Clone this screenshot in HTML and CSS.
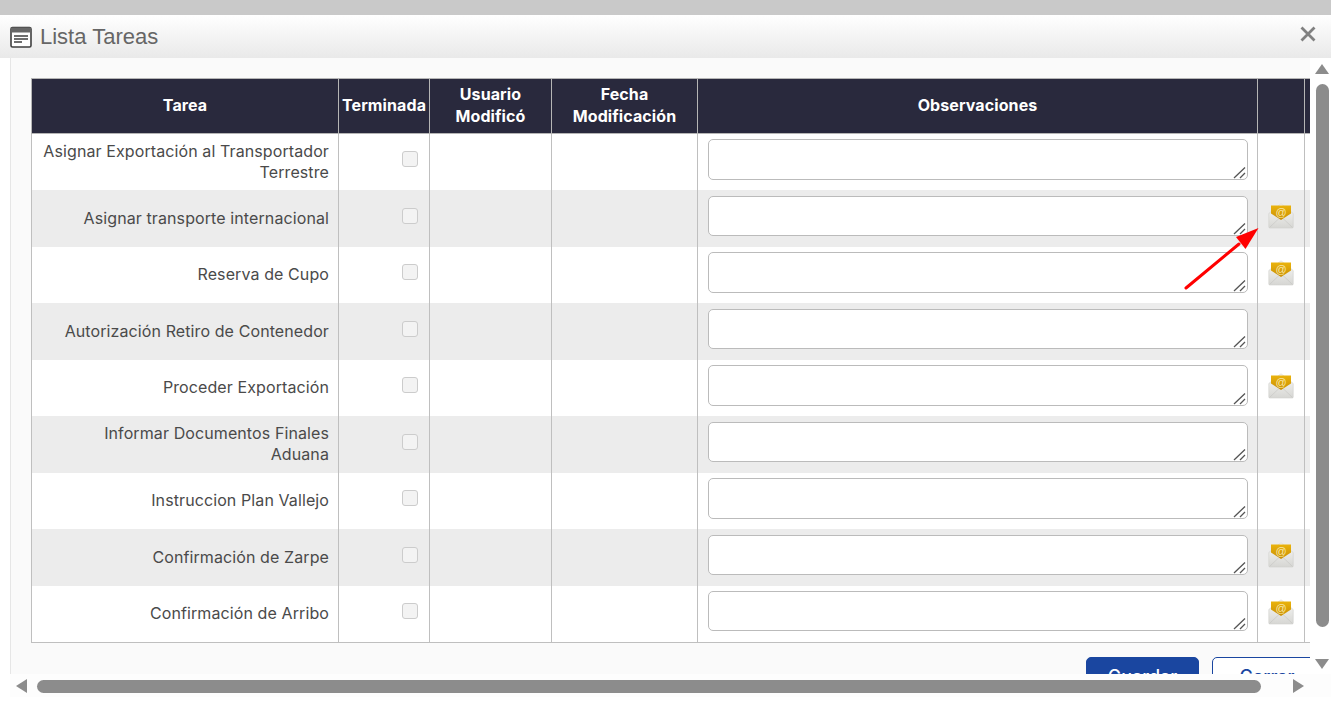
FILE: index.html
```html
<!DOCTYPE html>
<html lang="es">
<head>
<meta charset="utf-8">
<title>Lista Tareas</title>
<link rel="stylesheet" href="styles.css">
</head>
<body>
<svg class="defs" width="0" height="0" aria-hidden="true">
  <defs>
    <linearGradient id="gold" x1="0" y1="0" x2="0" y2="1"><stop offset="0" stop-color="#eab30c"/><stop offset="1" stop-color="#c98f05"/></linearGradient>
    <linearGradient id="env" x1="0" y1="0" x2="0" y2="1"><stop offset="0" stop-color="#fafaf8"/><stop offset="1" stop-color="#d6d6d3"/></linearGradient>
    <symbol id="mail" viewBox="0 0 26 26">
      <path d="M.8 10.500 13 .8l12.200 9.700V24q0 1-1 1H1.800q-1 0-1-1z" fill="url(#env)" stroke="#d0d0cd" stroke-width=".6"/>
      <path d="M3 2.500h20v8L13 17 3 10.500z" fill="url(#gold)"/>
      <text x="13" y="12.500" text-anchor="middle" class="mail-at">@</text>
      <path d="M1.500 24.500 11 15.500M24.500 24.500 15 15.500" stroke="#c4c4c1" stroke-width=".6" fill="none"/>
    </symbol>
  </defs>
</svg>
<main class="dialog">
  <header class="dialog-head">
    <svg class="head-icon" viewBox="0 0 22 22" width="22" height="22" aria-hidden="true">
      <rect x="1" y="1.500" width="20" height="19.500" rx="1.500" fill="#fff" stroke="#3f3f3f" stroke-width="1.600"/>
      <rect x="1" y="1.500" width="20" height="5" fill="#666"/>
      <path d="M4 10h14M4 13h14M4 16h8" stroke="#3f3f3f" stroke-width="1.300" fill="none"/>
    </svg>
    <h1 class="dialog-title">Lista Tareas</h1>
    <svg class="close" viewBox="0 0 16 16" width="16" height="16" aria-hidden="true"><path d="M1.500 1.500l13 13M14.500 1.500l-13 13" stroke="#808080" stroke-width="2.800" fill="none"/></svg>
  </header>
  <div class="dialog-main">
    <div class="viewport">
      <div class="scroll-content">
        <table class="tasks">
          <colgroup><col class="c1"><col class="c2"><col class="c3"><col class="c4"><col class="c5"><col class="c6"><col class="c7"></colgroup>
          <thead>
            <tr><th>Tarea</th><th>Terminada</th><th>Usuario Modificó</th><th>Fecha Modificación</th><th>Observaciones</th><th></th><th></th></tr>
          </thead>
          <tbody>
            <tr><td class="name">Asignar Exportación al Transportador Terrestre</td><td class="chk"><input type="checkbox" disabled></td><td></td><td></td><td class="obs"><textarea></textarea></td><td></td><td></td></tr>
            <tr><td class="name">Asignar transporte internacional</td><td class="chk"><input type="checkbox" disabled></td><td></td><td></td><td class="obs"><textarea></textarea></td><td class="act"><svg class="mail"><use href="#mail"/></svg></td><td></td></tr>
            <tr><td class="name">Reserva de Cupo</td><td class="chk"><input type="checkbox" disabled></td><td></td><td></td><td class="obs"><textarea></textarea></td><td class="act"><svg class="mail"><use href="#mail"/></svg></td><td></td></tr>
            <tr><td class="name">Autorización Retiro de Contenedor</td><td class="chk"><input type="checkbox" disabled></td><td></td><td></td><td class="obs"><textarea></textarea></td><td></td><td></td></tr>
            <tr><td class="name">Proceder Exportación</td><td class="chk"><input type="checkbox" disabled></td><td></td><td></td><td class="obs"><textarea></textarea></td><td class="act"><svg class="mail"><use href="#mail"/></svg></td><td></td></tr>
            <tr><td class="name">Informar Documentos Finales<br>Aduana</td><td class="chk"><input type="checkbox" disabled></td><td></td><td></td><td class="obs"><textarea></textarea></td><td></td><td></td></tr>
            <tr><td class="name">Instruccion Plan Vallejo</td><td class="chk"><input type="checkbox" disabled></td><td></td><td></td><td class="obs"><textarea></textarea></td><td></td><td></td></tr>
            <tr><td class="name">Confirmación de Zarpe</td><td class="chk"><input type="checkbox" disabled></td><td></td><td></td><td class="obs"><textarea></textarea></td><td class="act"><svg class="mail"><use href="#mail"/></svg></td><td></td></tr>
            <tr><td class="name">Confirmación de Arribo</td><td class="chk"><input type="checkbox" disabled></td><td></td><td></td><td class="obs"><textarea></textarea></td><td class="act"><svg class="mail"><use href="#mail"/></svg></td><td></td></tr>
          </tbody>
        </table>
        <div class="actions">
          <button class="btn primary" type="button">Guardar</button>
          <button class="btn secondary" type="button">Cerrar</button>
        </div>
      </div>
    </div>
    <div class="vbar">
      <span class="arrow up"></span>
      <span class="vthumb"></span>
      <span class="arrow down"></span>
    </div>
    <div class="hbar">
      <span class="arrow left"></span>
      <span class="hthumb"></span>
      <span class="arrow right"></span>
    </div>
  </div>
  <svg class="pointer" viewBox="0 0 80 85" width="80" height="85" aria-hidden="true">
    <path d="M5 79 58 35" stroke="#f00" stroke-width="3" stroke-linecap="round" fill="none"/>
    <path d="M77.500 19 55 28 64.500 40z" fill="#f00"/>
  </svg>
</main>
</body>
</html>
```
FILE: styles.css
```css
* { box-sizing: border-box; }
html, body { margin: 0; height: 100%; overflow: hidden; }
body { background: #fff; font-family: "Inter", "Liberation Sans", sans-serif; padding-top: 15px; position: relative; }
body::before { content: ""; position: absolute; left: 0; right: 0; top: 0; height: 15px; background: #c9c9c9; }
.defs { position: absolute; }
.dialog { position: relative; height: 689px; display: flex; flex-direction: column; background: #fff; border-radius: 6px 0 0 0; }
.dialog-head { height: 43px; flex: none; display: flex; align-items: center; padding: 0 14px 0 10px; background: linear-gradient(#ffffff, #e9e9e9); }
.head-icon { flex: none; margin-right: 8px; }
.dialog-title { flex: 1; margin: 0; font: 400 22px "Liberation Sans", Arial, sans-serif; color: #666; }
.close { flex: none; margin: 0 0 5px 0; transform: translateX(-1px); }
.dialog-main { display: grid; grid-template-columns: 1300px 21px; grid-template-rows: 616px 23px; margin-left: 10px; }
.viewport { overflow: hidden; background: #fafafa; border-left: 1px solid #e6e6e6; }
.scroll-content { width: 1320px; padding: 20px 0 0 20px; }
.tasks { border-collapse: collapse; table-layout: fixed; width: 1292px; font-size: 16px; color: #4a4a4a; }
.c1 { width: 307px; } .c2 { width: 91px; } .c3 { width: 122px; } .c4 { width: 146px; } .c5 { width: 560px; } .c6 { width: 47px; } .c7 { width: 19px; }
.tasks th { height: 55px; padding: 0 2px 2px; background: #29293d; color: #fff; font-weight: 700; font-size: 16px; line-height: 22px; text-align: center; letter-spacing: .1px; border: 1px solid #b5b5b5; }
.tasks td { height: 56.500px; padding: 0; background: #fff; border: 1px solid #bfbfbf; border-top: 0; border-bottom: 0; vertical-align: middle; }
.tasks tbody tr:nth-child(even) td { background: #ececec; }
.tasks tbody tr:last-child td { border-bottom: 1px solid #bfbfbf; }
.tasks td.name { padding: 0 9px 0 10px; text-align: right; line-height: 21.500px; letter-spacing: .1px; }
.tasks td.chk { text-align: right; padding-right: 11px; }
.chk input { appearance: none; display: block; width: 16px; height: 16px; margin: -5.400px 0 0 auto; border: 1px solid #ccc; border-radius: 3px; background: #f3f3f3; }
.tasks td.obs { padding: 0 9px 0 10px; }
.obs textarea { display: block; width: 100%; height: 40.500px; margin: -2.500px 0 2.500px; padding: 4px; border: 1px solid #bbb; border-radius: 5px; background: #fff; font: inherit; }
.obs textarea::-webkit-resizer { background: url("data:image/svg+xml,%3Csvg xmlns='http://www.w3.org/2000/svg' width='15' height='15'%3E%3Cpath d='M2 14 13 3.500M8 14 13 9' stroke='%23555' stroke-width='1.300' fill='none'/%3E%3C/svg%3E") no-repeat; }
.tasks td.act { text-align: center; }
.mail { display: block; width: 26px; height: 26px; margin: -4px auto 0; }
.mail-at { font: 400 11px "Liberation Sans", sans-serif; fill: #f8e7a8; }
.actions { display: flex; gap: 13px; margin: 14px 0 0 1055px; }
.btn { height: 42px; border-radius: 5px; font: 500 18px "Inter", "Liberation Sans", sans-serif; padding: 0 0 2px; text-align: center; }
.primary { width: 113px; background: #1a46a0; border: 1px solid #1a46a0; color: #fff; }
.secondary { width: 110px; background: #fff; border: 1px solid #1a46a0; color: #1a46a0; }
.vbar { display: flex; flex-direction: column; align-items: center; background: #fff; padding: 6px 0 4px 3px; }
.vthumb { width: 13px; height: 543px; margin: 10px 0 32px; background: #8c8c8c; border-radius: 7px; flex: none; }
.hbar { grid-column: 1 / 3; display: flex; align-items: center; background: #fdfdfd; padding: 1px 27px 0 6px; }
.hthumb { width: 1224px; height: 13px; margin: 0 32px 0 10px; background: #8c8c8c; border-radius: 7px; flex: none; }
.arrow { display: block; width: 0; height: 0; flex: none; border-style: solid; border-color: transparent; }
.arrow.up { border-width: 0 7.500px 10px; border-bottom-color: #8c8c8c; }
.arrow.down { border-width: 10px 7.500px 0; border-top-color: #8c8c8c; }
.arrow.left { border-width: 7px 11px 7px 0; border-right-color: #8c8c8c; }
.arrow.right { border-width: 7px 0 7px 11px; border-left-color: #8c8c8c; }
.pointer { position: absolute; left: 1181px; top: 194px; }
```
